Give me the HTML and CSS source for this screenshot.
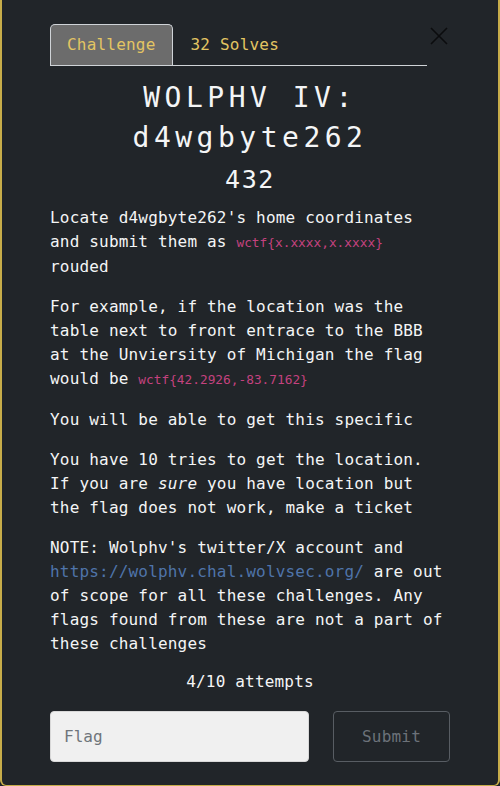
FILE: index.html
```html
<!DOCTYPE html>
<html lang="en">
<head>
<meta charset="utf-8">
<title>Challenge</title>
<link rel="stylesheet" href="styles.css">
</head>
<body>
<div class="modal">
  <div class="modal-body">
    <div class="tabs-row">
      <ul class="tabs">
        <li class="tab active">Challenge</li>
        <li class="tab">32 Solves</li>
      </ul>
      <button class="close" aria-label="Close">
        <svg width="18" height="18" viewBox="0 0 18 18"><path d="M1 1 L17 17 M17 1 L1 17" stroke="#0b0c0e" stroke-width="1.6" fill="none"/></svg>
      </button>
    </div>
    <div class="tab-content">
      <h3 class="title">WOLPHV IV: d4wgbyte262</h3>
      <h4 class="value">432</h4>
      <div class="description">
        <p>Locate d4wgbyte262's home coordinates and submit them as <code>wctf{x.xxxx,x.xxxx}</code> rouded</p>
        <p>For example, if the location was the table next to front entrace to the BBB at the Unviersity of Michigan the flag would be <code>wctf{42.2926,-83.7162}</code></p>
        <p>You will be able to get this specific</p>
        <p>You have 10 tries to get the location. If you are <em>sure</em> you have location but the flag does not work, make a ticket</p>
        <p>NOTE: Wolphv's twitter/X account and <a href="#">https://wolphv.chal.wolvsec.org/</a> are out of scope for all these challenges. Any flags found from these are not a part of these challenges</p>
      </div>
      <p class="attempts">4/10 attempts</p>
      <form class="submit-row">
        <input class="flag-input" type="text" placeholder="Flag">
        <button class="submit-btn" type="button">Submit</button>
      </form>
    </div>
  </div>
</div>
</body>
</html>
```
FILE: styles.css
```css
html, body {
  margin: 0;
  padding: 0;
  background: #212529;
}
body {
  font-family: "DejaVu Sans Mono", "Liberation Mono", monospace;
  color: #f4f5f6;
  font-size: 16px;
  line-height: 24px;
}
.modal {
  box-sizing: border-box;
  width: 500px;
  height: 786px;
  background: #212529;
  border-left: 2px solid #c7ad4a;
  border-right: 2px solid #c7ad4a;
  border-bottom: 1px solid #c7ad4a;
  border-radius: 0 0 6px 6px;
}
.modal-body {
  padding: 24px 48px 0 48px;
}
.tabs-row {
  display: flex;
  align-items: flex-start;
}
.tabs {
  list-style: none;
  margin: 0;
  padding: 0;
  display: flex;
  width: 377px;
  border-bottom: 1px solid #cfd3d7;
}
.tab {
  padding: 8px 17px;
  color: #e3c563;
  letter-spacing: 0.2px;
  border: 1px solid transparent;
  border-bottom: none;
  border-radius: 5px 5px 0 0;
}
.tab.active {
  background: #6c6c6c;
  border-color: #cfd3d7;
  padding: 8px 16px;
}
.close {
  margin-top: 2px;
  margin-left: 2px;
  background: none;
  border: none;
  padding: 0;
  width: 20px;
  height: 20px;
  display: flex;
  align-items: center;
  justify-content: center;
}
.tab-content {
  text-align: center;
}
.title {
  margin: 12px 0 0 0;
  font-size: 28px;
  font-weight: normal;
  line-height: 40px;
  letter-spacing: 4.5px;
}
.value {
  margin: 7px 0 0 0;
  font-size: 25px;
  font-weight: normal;
  line-height: 30px;
  letter-spacing: 1.6px;
}
.description {
  text-align: left;
  margin-top: 11px;
  letter-spacing: 0.18px;
}
.description p {
  margin: 0 0 16px 0;
}
.description p:last-child {
  margin-bottom: 0;
}
code {
  font-family: "DejaVu Sans Mono", "Liberation Mono", monospace;
  font-size: 12.8px;
  letter-spacing: 0;
  color: #c4427f;
}
a {
  color: #4f74aa;
  text-decoration: none;
}
.attempts {
  margin: 14px 0 0 0;
  letter-spacing: 0.18px;
}
.submit-row {
  display: flex;
  gap: 24px;
  margin-top: 17px;
}
.flag-input {
  box-sizing: border-box;
  width: 259px;
  height: 51px;
  background: #f0f0f0;
  border: 1px solid #d8d8d8;
  border-radius: 4px;
  padding: 0 13px;
  font-family: "DejaVu Sans Mono", "Liberation Mono", monospace;
  font-size: 16px;
  color: #333;
}
.flag-input::placeholder {
  color: #6f757b;
}
.submit-btn {
  box-sizing: border-box;
  width: 117px;
  height: 51px;
  background: transparent;
  border: 1px solid #585d63;
  border-radius: 4px;
  color: #6c7279;
  font-family: "DejaVu Sans Mono", "Liberation Mono", monospace;
  font-size: 16px;
  letter-spacing: 0.2px;
}
```
